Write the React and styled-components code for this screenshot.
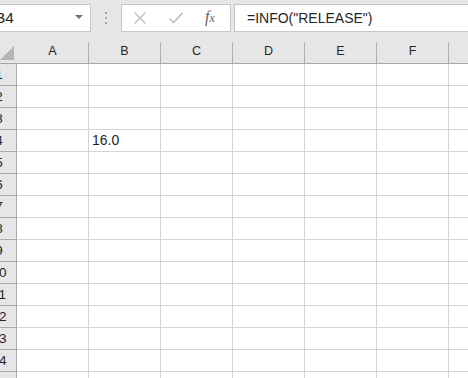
import styled, { createGlobalStyle } from 'styled-components';

const GlobalStyle = createGlobalStyle`
  html, body {
    margin: 0;
    padding: 0;
    background: #ffffff;
    overflow: hidden;
  }
`

const columns = ["A", "B", "C", "D", "E", "F", "G"]
const rows = Array.from({ length: 15 }, (_, i) => i + 1)
const values = { "4-B": "16.0" }

export default function App() {
    return <Window>
        <GlobalStyle />
        <TopBar>
            <NameBox>
                <NameText>B4</NameText>
                <DropArrow />
            </NameBox>
            <Grip>
                <Dot /><Dot /><Dot />
            </Grip>
            <FuncBox>
                <svg width="14" height="14" viewBox="0 0 14 14">
                    <path d="M1.5 1.5 L12.5 12.5 M12.5 1.5 L1.5 12.5" stroke="#bdbdbd" strokeWidth="1.3" fill="none" />
                </svg>
                <svg width="16" height="14" viewBox="0 0 16 14">
                    <path d="M1.5 7.5 L5.5 11.5 L14.5 2" stroke="#bdbdbd" strokeWidth="1.6" fill="none" />
                </svg>
                <FxLabel>f<small>x</small></FxLabel>
            </FuncBox>
            <FormulaInput>=INFO("RELEASE")</FormulaInput>
        </TopBar>
        <HeaderRow>
            <Corner><Triangle /></Corner>
            {columns.map(c => <ColHead key={c}>{c}</ColHead>)}
        </HeaderRow>
        {rows.map(r => <Row key={r}>
            <RowHead>{r}</RowHead>
            {columns.map(c => <Cell key={c}>{values[r + "-" + c] || ""}</Cell>)}
        </Row>)}
    </Window>
}

const Window = styled.div`
  width: 468px;
  height: 378px;
  overflow: hidden;
  background: #ffffff;
  font-family: "Liberation Sans", Arial, sans-serif;
`

const TopBar = styled.div`
  display: flex;
  align-items: flex-start;
  height: 42px;
  box-sizing: border-box;
  padding-top: 4px;
  background: #e6e6e6;
`

const NameBox = styled.div`
  display: flex;
  align-items: center;
  flex: none;
  margin-left: -10px;
  width: 101px;
  height: 28px;
  box-sizing: border-box;
  border: 1px solid #c6c6c6;
  background: #ffffff;
`

const NameText = styled.span`
  flex: 1;
  padding-left: 4px;
  font-size: 15.5px;
  color: #262626;
`

const DropArrow = styled.span`
  width: 0;
  height: 0;
  margin-right: 7px;
  margin-top: -2px;
  border-left: 4px solid transparent;
  border-right: 4px solid transparent;
  border-top: 4px solid #6f6f6f;
`

const Grip = styled.div`
  display: flex;
  flex-direction: column;
  align-items: center;
  gap: 3px;
  flex: none;
  width: 30px;
  padding-top: 8px;
`

const Dot = styled.span`
  width: 2px;
  height: 2px;
  background: #a6a6a6;
`

const FuncBox = styled.div`
  display: flex;
  align-items: center;
  gap: 21px;
  flex: none;
  width: 110px;
  height: 28px;
  box-sizing: border-box;
  border: 1px solid #c6c6c6;
  background: #ffffff;
  padding-left: 11px;
`

const FxLabel = styled.span`
  margin-top: -2px;
  font-family: "Liberation Serif", "Times New Roman", serif;
  font-style: italic;
  font-size: 16px;
  color: #666666;
  small {
    font-size: 12px;
  }
`

const FormulaInput = styled.div`
  flex: none;
  width: 250px;
  margin-left: 3px;
  height: 28px;
  box-sizing: border-box;
  border: 1px solid #c6c6c6;
  border-right: none;
  background: #ffffff;
  padding-left: 12px;
  display: flex;
  align-items: center;
  font-size: 14px;
  color: #262626;
`

const HeaderRow = styled.div`
  display: flex;
  height: 22px;
  box-sizing: border-box;
  border-bottom: 1px solid #a9a9a9;
  background: #e6e6e6;
`

const Corner = styled.div`
  display: flex;
  justify-content: flex-end;
  align-items: flex-end;
  flex: none;
  margin-left: -18px;
  width: 35px;
  box-sizing: border-box;
  padding: 0 2px 3px 0;
  border-right: 1px solid #e6e6e6;
`

const Triangle = styled.span`
  width: 0;
  height: 0;
  border-left: 14px solid transparent;
  border-bottom: 14px solid #b5b5b5;
`

const ColHead = styled.div`
  flex: none;
  width: 72px;
  box-sizing: border-box;
  border-right: 1px solid #b0b0b0;
  display: flex;
  justify-content: center;
  align-items: center;
  padding-bottom: 4px;
  font-size: 12.5px;
  color: #262626;
`

const Row = styled.div`
  display: flex;
  height: 22px;
  box-sizing: border-box;
  border-bottom: 1px solid #d4d4d4;
`

const RowHead = styled.div`
  flex: none;
  margin-left: -18px;
  width: 35px;
  box-sizing: border-box;
  margin-bottom: -1px;
  border-bottom: 1px solid #ababab;
  border-right: 1px solid #ababab;
  background: #e6e6e6;
  display: flex;
  justify-content: center;
  align-items: center;
  font-size: 13.5px;
  color: #262626;
`

const Cell = styled.div`
  flex: none;
  width: 72px;
  box-sizing: border-box;
  border-right: 1px solid #d4d4d4;
  display: flex;
  align-items: flex-end;
  padding: 0 0 3px 3px;
  font-size: 14px;
  color: #1f1f1f;
`
